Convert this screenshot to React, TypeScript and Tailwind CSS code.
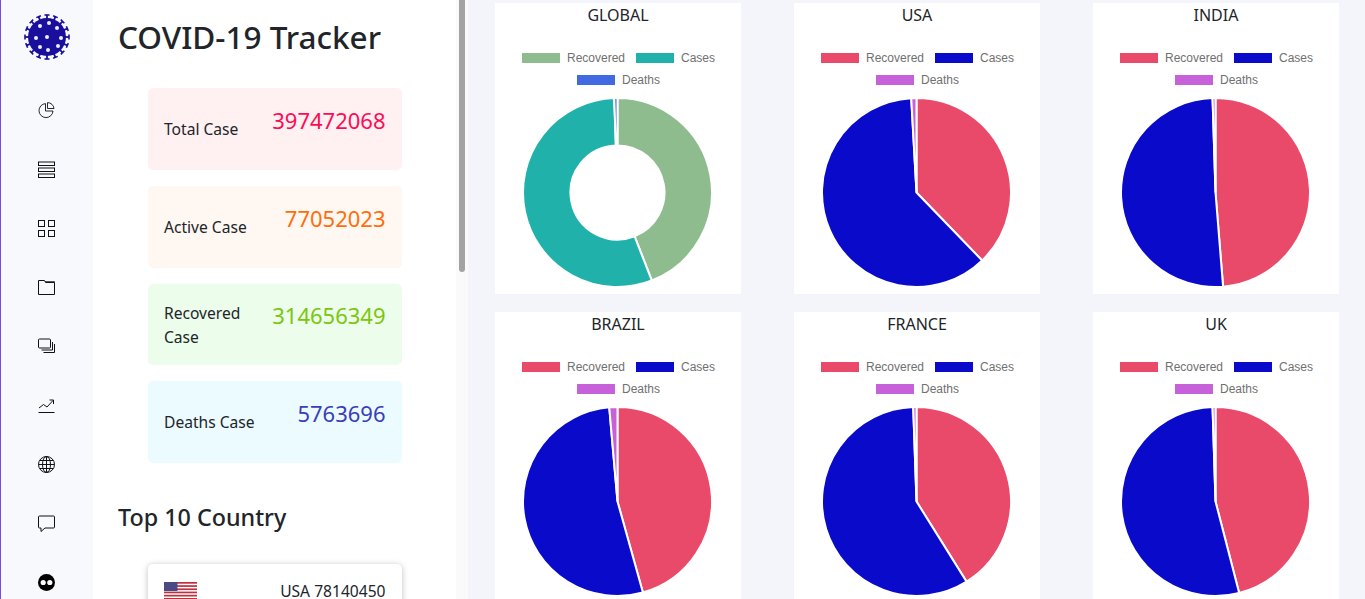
import React from "react";

const stats = [
  { label: "Total Case", value: "397472068", bg: "bg-[#fff1f2]", color: "text-[#ff0a54]", h: "h-[82px]" },
  { label: "Active Case", value: "77052023", bg: "bg-[#fff7f2]", color: "text-[#ff6d0a]", h: "h-[82px]" },
  { label: "Recovered Case", value: "314656349", bg: "bg-[#edfdec]", color: "text-[#7ac70c]", h: "h-[81px]" },
  { label: "Deaths Case", value: "5763696", bg: "bg-[#ecfbff]", color: "text-[#3a3eb8]", h: "h-[82px]" },
];

const G = { a: "#8fbc8f", b: "#20b2aa", c: "#4169e1" };
const R = { a: "#ea4a6a", b: "#0a0bca", c: "#c761d9" };

const charts = [
  { title: "GLOBAL", end1: 158.7, end2: 358, colors: G, donut: true },
  { title: "USA", end1: 136, end2: 356.8, colors: R, donut: false },
  { title: "INDIA", end1: 175.4, end2: 358.2, colors: R, donut: false },
  { title: "BRAZIL", end1: 164.4, end2: 355, colors: R, donut: false },
  { title: "FRANCE", end1: 148, end2: 358, colors: R, donut: false },
  { title: "UK", end1: 165.5, end2: 358.2, colors: R, donut: false },
];

const RAD = 94.5;
const CX = 94.5;
const CY = 95.5;

function pt(r: number, deg: number) {
  const a = (deg * Math.PI) / 180;
  return [CX + r * Math.sin(a), CY - r * Math.cos(a)];
}

function slice(from: number, to: number, inner: number) {
  const large = to - from > 180 ? 1 : 0;
  const [x1, y1] = pt(RAD, from);
  const [x2, y2] = pt(RAD, to);
  if (inner > 0) {
    const [x3, y3] = pt(inner, to);
    const [x4, y4] = pt(inner, from);
    return `M${x1} ${y1}A${RAD} ${RAD} 0 ${large} 1 ${x2} ${y2}L${x3} ${y3}A${inner} ${inner} 0 ${large} 0 ${x4} ${y4}Z`;
  }
  return `M${CX} ${CY}L${x1} ${y1}A${RAD} ${RAD} 0 ${large} 1 ${x2} ${y2}Z`;
}

function Pie({ c }: { c: (typeof charts)[number] }) {
  const inner = c.donut ? 47 : 0;
  return (
    <svg width="190" height="191" viewBox="0 0 190 191" className="block">
      <path d={slice(0, c.end1, inner)} fill={c.colors.a} stroke="#fff" strokeWidth="2" />
      <path d={slice(c.end1, c.end2, inner)} fill={c.colors.b} stroke="#fff" strokeWidth="2" />
      <path d={slice(c.end2, 360, inner)} fill={c.colors.c} stroke="#fff" strokeWidth="2" />
    </svg>
  );
}

function Legend({ label, color }: { label: string; color: string }) {
  return (
    <div className="flex items-center gap-[7px]">
      <span className="block w-[38px] h-[10px]" style={{ backgroundColor: color }} />
      <span>{label}</span>
    </div>
  );
}

function ChartCard({ c }: { c: (typeof charts)[number] }) {
  return (
    <div className="bg-white w-[246px] h-[291px] flex flex-col items-center">
      <div className="text-[16px] leading-[24px] text-[#212529] font-['Noto_Sans',sans-serif]">{c.title}</div>
      <div className="mt-[24px] pl-[1px] font-['Liberation_Sans',sans-serif] text-[12px] leading-[14px] text-[#707070] flex flex-col items-center gap-[8px]">
        <div className="flex gap-[11px]">
          <Legend label="Recovered" color={c.colors.a} />
          <Legend label="Cases" color={c.colors.b} />
        </div>
        <Legend label="Deaths" color={c.colors.c} />
      </div>
      <div className="mt-[10px]">
        <Pie c={c} />
      </div>
    </div>
  );
}

function Virus() {
  const spikes = Array.from({ length: 16 }, (_, i) => (i * 360) / 16);
  const dots = [
    [23, 23], [16, 12], [25, 9], [33, 14], [12, 24], [37, 24], [16, 33], [24, 36], [34, 32],
  ];
  return (
    <svg width="46" height="46" viewBox="0 0 46 46">
      {spikes.map((a) => (
        <g key={a} transform={`rotate(${a} 23 23)`} stroke="#1a0f9c">
          <path d="M23 5V1" strokeWidth="1.8" />
          <path d="M20.5 1H25.5" strokeWidth="1.6" />
        </g>
      ))}
      <circle cx="23" cy="23" r="19" fill="#1a0f9c" />
      {dots.map(([x, y]) => (
        <circle key={`${x}-${y}`} cx={x} cy={y} r="2" fill="#eeeefb" />
      ))}
    </svg>
  );
}

const ic = { width: 17, height: 17, viewBox: "0 0 17 17", fill: "none", stroke: "#111", strokeWidth: 1 };

const icons = [
  <svg key="pie" {...ic}>
    <path d="M7.5 1.6A7 7 0 1 0 15 9H7.5V1.6Z" strokeWidth="0.9" />
    <path d="M9.5 0.6V6.5H16A6.5 6.5 0 0 0 9.5 0.6Z" strokeWidth="0.9" />
  </svg>,
  <svg key="list" {...ic}>
    <rect x="0.5" y="1" width="16" height="3.5" />
    <rect x="0.5" y="7" width="16" height="3.5" />
    <rect x="0.5" y="13" width="16" height="3.5" />
  </svg>,
  <svg key="grid" {...ic}>
    <rect x="0.5" y="0.5" width="6" height="6" />
    <rect x="10.5" y="0.5" width="6" height="6" />
    <rect x="0.5" y="10.5" width="6" height="6" />
    <rect x="10.5" y="10.5" width="6" height="6" />
  </svg>,
  <svg key="folder" {...ic}>
    <path d="M0.5 1.5H6.5L7.5 3.5H16.5V15.5H0.5Z" />
    <path d="M7 2.5H16.5V3.5" strokeWidth="0.7" />
  </svg>,
  <svg key="copy" {...ic}>
    <rect x="0.5" y="1" width="12" height="9" rx="1" />
    <path d="M14.5 4V12H3.5" />
    <path d="M16.5 6V14.5H5.5" />
  </svg>,
  <svg key="chart" {...ic}>
    <path d="M0.5 15.5H16.5" />
    <path d="M1 11L5.5 7.5L9 10L15 3.5" />
    <path d="M11.5 3H15.5V7" />
  </svg>,
  <svg key="globe" {...ic}>
    <circle cx="8.5" cy="8.5" r="8" />
    <ellipse cx="8.5" cy="8.5" rx="4" ry="8" />
    <path d="M8.5 0.5V16.5M0.5 8.5H16.5M1.8 4.5H15.2M1.8 12.5H15.2" />
  </svg>,
  <svg key="chat" {...ic}>
    <path d="M1.5 1H15.5A1 1 0 0 1 16.5 2V12A1 1 0 0 1 15.5 13H7L3 16.5V13H1.5A1 1 0 0 1 0.5 12V2A1 1 0 0 1 1.5 1Z" />
  </svg>,
  <svg key="dots" {...ic} stroke="none">
    <circle cx="8.5" cy="8.5" r="8.5" fill="#000" />
    <circle cx="5.2" cy="8.5" r="2.6" fill="#fff" />
    <circle cx="11.8" cy="8.5" r="2.6" fill="#fff" />
  </svg>,
];

function Flag() {
  const stripes = [0, 1, 2, 3, 4, 5, 6];
  return (
    <svg width="33" height="22" viewBox="0 0 33 22" className="block">
      <rect width="33" height="22" fill="#fff" />
      {stripes.map((i) => (
        <rect key={i} y={i * 3.2} width="33" height="1.7" fill="#c0303f" />
      ))}
      <rect width="13.5" height="9" fill="#4a4a85" />
    </svg>
  );
}

export default function App() {
  return (
    <div className="flex h-[599px] w-[1365px] overflow-hidden bg-[#f4f5fb]">
      <aside className="w-[93px] shrink-0 bg-[#f8f9fd] border-l-[1px] border-[#7c4dd0] flex flex-col items-center">
        <div className="mt-[14px]">
          <Virus />
        </div>
        <div className="mt-[42px] pr-[1px] flex flex-col items-center gap-[42px]">
          {icons.map((i, n) => (
            <div key={n} className="h-[17px] w-[17px]">
              {i}
            </div>
          ))}
        </div>
      </aside>

      <section className="w-[375px] shrink-0 bg-white flex h-full">
        <div className="w-[363px] shrink-0 overflow-hidden font-['Noto_Sans',sans-serif] text-[#212529]">
          <h1 className="ml-[25px] mt-[15px] text-[31.5px] leading-[44px] font-medium whitespace-nowrap">COVID-19 Tracker</h1>
          <div className="ml-[55px] w-[254px] mt-[29px] flex flex-col gap-[16px]">
            {stats.map((s) => (
              <div key={s.label} className={`${s.h} ${s.bg} rounded-[5px] pl-[16px] pr-[16.5px] flex items-center justify-between`}>
                <div className="w-[100px] text-[15.6px] leading-[24px]">{s.label}</div>
                <div className={`${s.color} text-[22px] leading-[27px] mb-[18px]`}>{s.value}</div>
              </div>
            ))}
          </div>
          <h2 className="ml-[25px] mt-[36px] text-[23.3px] leading-[36px] font-medium whitespace-nowrap">Top 10 Country</h2>
          <div className="ml-[55px] w-[254px] mt-[29px] h-[80px] bg-white rounded-[5px] shadow-[0_1px_6px_rgba(0,0,0,0.25)] pl-[16px] pr-[16.5px] pt-[18px] flex justify-between items-start">
            <Flag />
            <div className="text-[15.6px] leading-[18px]">USA 78140450</div>
          </div>
        </div>
        <div className="w-[12px] shrink-0 bg-[#fafafa] px-[3px]">
          <div className="h-[272px] bg-[#a3a3a3] rounded-b-[3px]" />
        </div>
      </section>

      <main className="flex-1 pl-[27px] pt-[3px]">
        <div className="grid grid-cols-[246px_246px_246px] gap-x-[53px] gap-y-[18px]">
          {charts.map((c) => (
            <ChartCard key={c.title} c={c} />
          ))}
        </div>
      </main>
    </div>
  );
}
